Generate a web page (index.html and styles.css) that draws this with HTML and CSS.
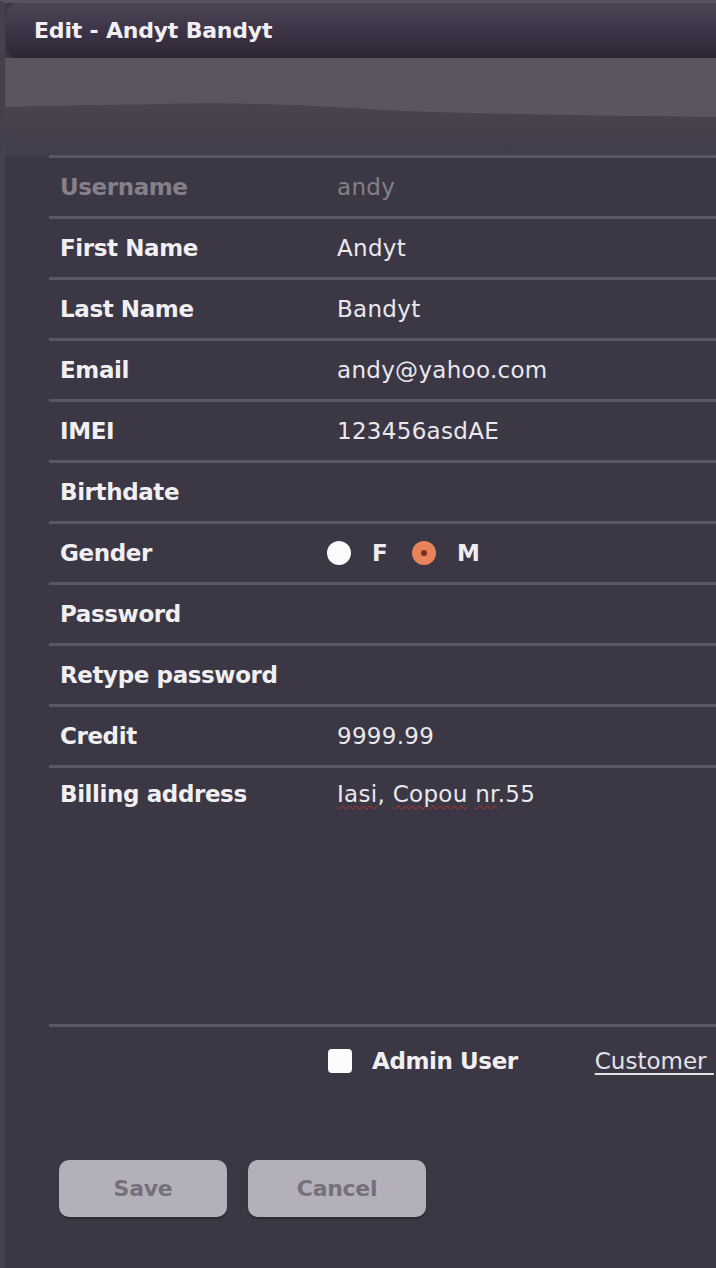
FILE: index.html
```html
<!DOCTYPE html>
<html lang="en">
<head>
<meta charset="utf-8">
<title>Edit - Andyt Bandyt</title>
<link rel="stylesheet" href="styles.css">
</head>
<body>
<div class="page">
  <div class="header"><h1 class="title">Edit - Andyt Bandyt</h1></div>
  <div class="band">
    <svg class="wave" viewBox="0 0 716 98" preserveAspectRatio="none" aria-hidden="true">
      <path d="M0 0 H716 V59 C600 58 480 56 380 52 C300 47 240 44 160 46 C90 47 40 48 0 49 Z" fill="#5b5562"/>
    </svg>
  </div>
  <form class="form">
    <div class="row disabled"><span class="label">Username</span><span class="value">andy</span></div>
    <div class="row"><span class="label">First Name</span><span class="value">Andyt</span></div>
    <div class="row"><span class="label">Last Name</span><span class="value">Bandyt</span></div>
    <div class="row"><span class="label">Email</span><span class="value">andy@yahoo.com</span></div>
    <div class="row"><span class="label">IMEI</span><span class="value">123456asdAE</span></div>
    <div class="row"><span class="label">Birthdate</span><span class="value"></span></div>
    <div class="row"><span class="label">Gender</span>
      <span class="value radios">
        <span class="radio"></span><span class="opt">F</span>
        <span class="radio checked"></span><span class="opt">M</span>
      </span>
    </div>
    <div class="row"><span class="label">Password</span><span class="value"></span></div>
    <div class="row"><span class="label">Retype password</span><span class="value"></span></div>
    <div class="row"><span class="label">Credit</span><span class="value">9999.99</span></div>
    <div class="row tall"><span class="label">Billing address</span><span class="value"><span class="spell">Iasi</span>, <span class="spell">Copou</span> <span class="spell">nr</span>.55</span></div>
    <div class="row extra">
      <span class="spacer"></span>
      <span class="check"></span><span class="admin">Admin User</span>
      <a class="link" href="#">Customer&nbsp;</a>
    </div>
    <div class="buttons">
      <button type="button" class="btn save">Save</button>
      <button type="button" class="btn cancel">Cancel</button>
    </div>
  </form>
</div>
</body>
</html>
```
FILE: styles.css
```css
html, body {
  margin: 0;
  padding: 0;
}
body {
  width: 716px;
  height: 1268px;
  overflow: hidden;
  background: #3c3745;
  font-family: "DejaVu Sans", Verdana, sans-serif;
  font-size: 23px;
  color: #eeedf0;
}
.page {
  height: 1268px;
  border-top: 3px solid #57525e;
  border-left: 5px solid #45404e;
  box-sizing: border-box;
  background: #3c3745;
  overflow: hidden;
}
.header {
  height: 55px;
  margin-left: 1px;
  border-radius: 12px 0 0 12px;
  background: linear-gradient(#4d4556 0%, #3d3447 50%, #2e2535 100%);
  display: flex;
  align-items: center;
  padding-left: 28px;
}
.title {
  margin: 0;
  font-size: 22px;
  font-weight: bold;
  letter-spacing: -0.2px;
  color: #f1eff3;
}
.band {
  height: 98px;
  background: linear-gradient(#4b4553 0%, #49434f 50%, #423d4b 100%);
}
.wave {
  display: block;
  width: 100%;
  height: 98px;
}
.form {
  margin: -1px 0 0 44px;
}
.row {
  display: flex;
  align-items: center;
  height: 58px;
  border-top: 3px solid #5b5663;
  padding-left: 11px;
  white-space: nowrap;
}
.label {
  width: 277px;
  flex: none;
  font-weight: bold;
  letter-spacing: -0.4px;
  color: #f0eff2;
}
.value {
  color: #e9e8ec;
  letter-spacing: 0.3px;
}
.disabled .label,
.disabled .value {
  color: #858089;
}
.radios {
  display: flex;
  align-items: center;
}
.radio {
  width: 24px;
  height: 24px;
  border-radius: 50%;
  background: #fbfbfc;
  margin-left: -10px;
  box-sizing: border-box;
}
.radio.checked {
  background: #e8845c;
  position: relative;
  margin-left: 24px;
}
.radio.checked::after {
  content: "";
  position: absolute;
  left: 9px;
  top: 9px;
  width: 6px;
  height: 6px;
  border-radius: 50%;
  background: #7a2e1e;
}
.opt {
  font-weight: bold;
  margin-left: 21px;
  color: #eeedf0;
}
.row.tall {
  height: 256px;
  align-items: flex-start;
}
.row.tall .label,
.row.tall .value {
  margin-top: 13px;
}
.spell {
  text-decoration: underline wavy #c0302a;
  text-decoration-thickness: 1px;
  text-underline-offset: 3px;
}
.row.extra {
  height: 68px;
}
.spacer {
  width: 268px;
  flex: none;
}
.check {
  width: 24px;
  height: 24px;
  border-radius: 4px;
  background: #fbfbfc;
  flex: none;
}
.admin {
  font-weight: bold;
  margin-left: 20px;
  letter-spacing: -0.4px;
  color: #f0eff2;
}
.link {
  margin-left: 77px;
  color: #e4e3e8;
  text-decoration: underline;
  text-underline-offset: 4px;
}
.buttons {
  display: flex;
  gap: 21px;
  margin-top: 65px;
  padding-left: 10px;
}
.btn {
  height: 57px;
  border: none;
  border-radius: 10px;
  background: #b4b0bb;
  color: #75707c;
  font-family: "DejaVu Sans", Verdana, sans-serif;
  font-size: 22px;
  font-weight: bold;
  letter-spacing: -0.3px;
  box-shadow: 0 2px 2px rgba(0, 0, 0, 0.25);
}
.save { width: 168px; }
.cancel { width: 178px; }
```
